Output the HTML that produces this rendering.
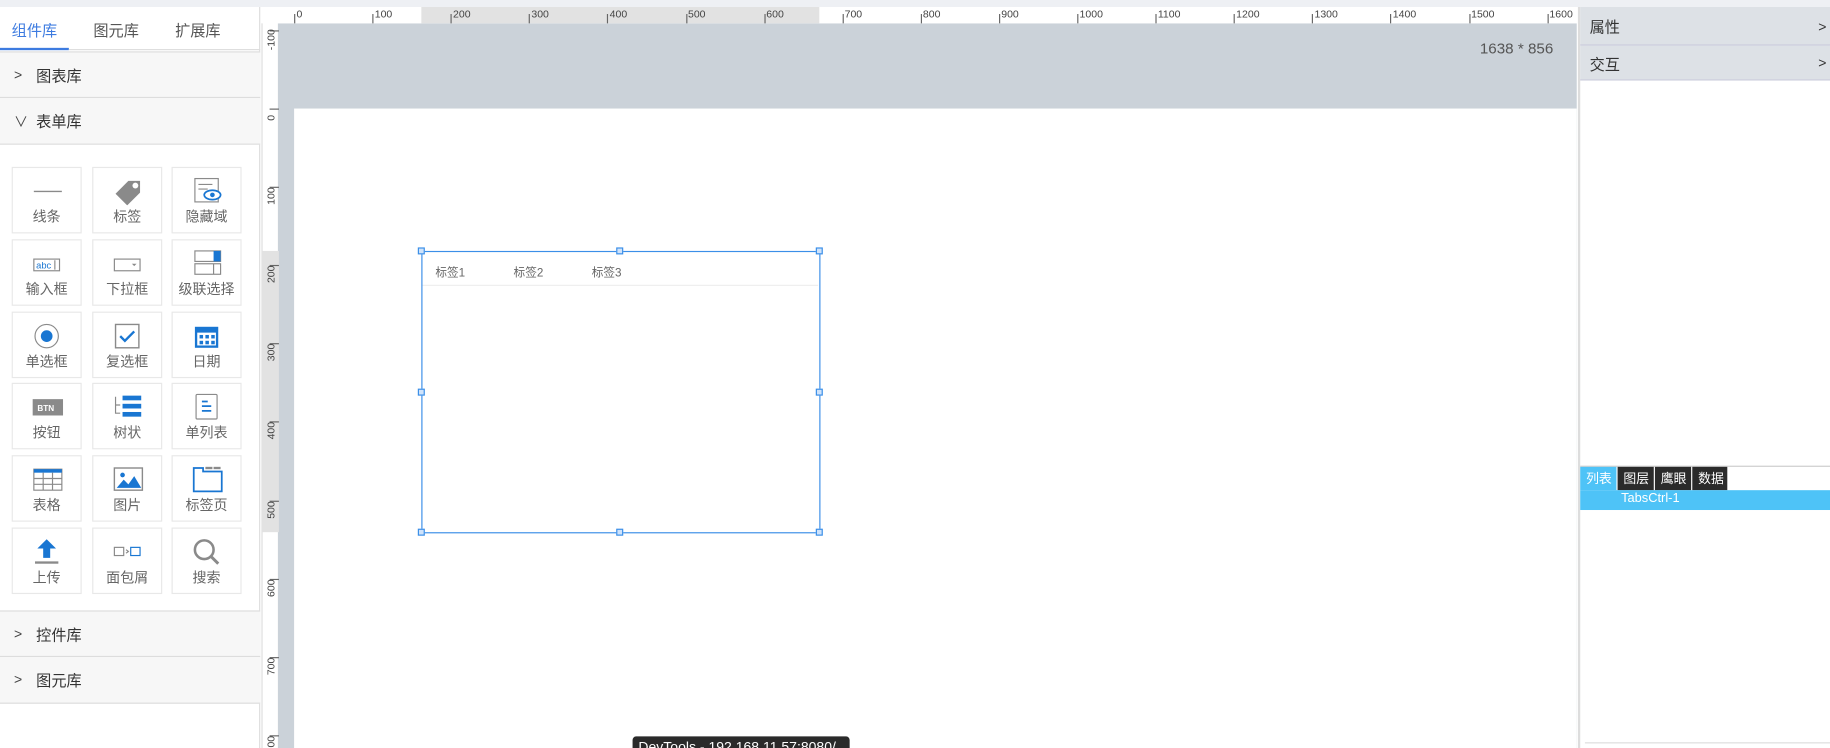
<!DOCTYPE html>
<html><head><meta charset="utf-8">
<style>
*{margin:0;padding:0;box-sizing:border-box}
html,body{width:1830px;height:748px;overflow:hidden;background:#fff}
#w{position:absolute;left:0;top:0;width:1568px;height:641px;transform:scale(1.16709);transform-origin:0 0;font-family:"Liberation Sans","Noto Sans CJK SC",sans-serif;color:#333;overflow:hidden}
.a{position:absolute}
.top{left:0;top:0;width:1568px;height:6px;background:#eef0f4}
.lp{left:0;top:6px;width:223px;height:635px;background:#fff;border-right:1px solid #ddd}
.tab{top:10px;font-size:13px;color:#555}
.sec{left:0;width:223px;height:40px;background:#f7f7f7;border-bottom:1px solid #ddd;font-size:13px;color:#333}
.sec span{position:absolute;left:31px;top:10px}
.sec i{position:absolute;left:12px;top:12px;font-style:normal;font-size:12px;color:#444}
.cell{width:60px;height:57px;border:1px solid #e8e8e8;background:#fff}
.cell b{position:absolute;left:0;right:0;top:33px;text-align:center;font-weight:normal;font-size:12px;color:#666}
.cell svg{position:absolute;left:16px;top:8px}
.rul{background:#fff;font-size:9px;color:#444}
.canvas{left:238px;top:20px;width:1113px;height:621px;background:#cbd2d9}
.page{left:252px;top:93px;width:1099px;height:548px;background:#fff}
.rp{left:1352px;top:6px;width:216px;height:635px;background:#fff;border-left:2px solid #ddd}
.rh{left:0;width:216px;height:33px;background:#dde1e6;border-bottom:1px solid #ccd;font-size:13px}
.rh span{position:absolute;left:8px;top:7px}
.rh i{position:absolute;right:5px;top:10px;font-style:normal;font-size:12px}
.h{width:6px;height:6px;border:1px solid #3b8fe8;background:#cfe3fb}
</style></head><body><div id="w">
<div class="a top"></div>
<div class="a lp">
 <div class="a tab" style="left:10px;color:#3d7be0">组件库</div>
 <div class="a tab" style="left:80px">图元库</div>
 <div class="a tab" style="left:150px">扩展库</div>
 <div class="a" style="left:0;top:35px;width:59px;height:2px;background:#3d7be0"></div>
 <div class="a" style="left:59px;top:36px;width:164px;height:1px;background:#ddd"></div>
 <div class="a sec" style="top:38px;border-top:1px solid #ddd"><i>&gt;</i><span>图表库</span></div>
 <div class="a sec" style="top:78px"><i>&#8744;</i><span>表单库</span></div>
 <div class="a sec" style="top:517px;border-top:1px solid #ddd"><i>&gt;</i><span>控件库</span></div>
 <div class="a sec" style="top:557px"><i>&gt;</i><span>图元库</span></div>
</div>
<div id="cells"></div>
<div class="a canvas"></div>
<div class="a page"></div>
<div class="a rul" id="hr" style="left:238px;top:6px;width:1113px;height:14px"></div>
<div class="a rul" id="vr" style="left:224px;top:20px;width:14px;height:621px;border-left:1px solid #ddd"></div>
<div class="a" style="left:1268px;top:34px;font-size:13px;color:#555">1638 * 856</div>
<div class="a" style="left:361px;top:215px;width:342px;height:242px;border:1.5px solid #3b8fe8;background:#fff">
 <div class="a" style="left:11px;top:9px;font-size:10px;color:#666">标签1</div>
 <div class="a" style="left:78px;top:9px;font-size:10px;color:#666">标签2</div>
 <div class="a" style="left:145px;top:9px;font-size:10px;color:#666">标签3</div>
 <div class="a" style="left:0;top:28px;width:339px;height:1px;background:#eee"></div>
</div>
<div class="a h" style="left:358px;top:212px"></div><div class="a h" style="left:528px;top:212px"></div><div class="a h" style="left:699px;top:212px"></div>
<div class="a h" style="left:358px;top:333px"></div><div class="a h" style="left:699px;top:333px"></div>
<div class="a h" style="left:358px;top:453px"></div><div class="a h" style="left:528px;top:453px"></div><div class="a h" style="left:699px;top:453px"></div>
<div class="a rp">
 <div class="a rh" style="top:0"><span>属性</span><i>&gt;</i></div>
 <div class="a rh" style="top:33px;height:30px"><span style="top:6px">交互</span><i style="top:8px">&gt;</i></div>
 <div class="a" style="left:0;top:393px;width:216px;height:1px;background:#ccc"></div>
 <div class="a" style="left:0;top:394px;width:31px;height:20px;background:#4ec3f7;color:#fff;font-size:11px;padding:2px 0 0 5px">列表</div>
 <div class="a" style="left:32px;top:394px;width:31px;height:20px;background:#2b2b2b;color:#fff;font-size:11px;padding:2px 0 0 5px">图层</div>
 <div class="a" style="left:64px;top:394px;width:31px;height:20px;background:#2b2b2b;color:#fff;font-size:11px;padding:2px 0 0 5px">鹰眼</div>
 <div class="a" style="left:96px;top:394px;width:30px;height:20px;background:#2b2b2b;color:#fff;font-size:11px;padding:2px 0 0 5px">数据</div>
 <div class="a" style="left:0;top:414px;width:216px;height:17px;background:#4ec3f7;color:#fff;font-size:11px;padding:1px 0 0 35px">TabsCtrl-1</div>
 <div class="a" style="left:4px;top:630px;width:212px;height:1px;background:#ddd"></div>
</div>
<div class="a" style="left:542px;top:631px;width:186px;height:14px;background:#2a2a2a;border-radius:3px;color:#fff;font-size:12px;padding:3px 0 0 5px;overflow:hidden;line-height:12px">DevTools - 192.168.11.57:8080/</div>
</div>
<script>
var B='#1976d2',G='#8a8a8a';
var icons=[
['线条','<line x1="2" y1="12" x2="26" y2="12" stroke="'+G+'" stroke-width="1.2"/>'],
['标签','<path d="M3 14 L14 3 H24 V13 L13 24 Z" fill="'+G+'"/><circle cx="20" cy="7" r="2.5" fill="#fff"/>'],
['隐藏域','<rect x="3" y="1" width="20" height="20" fill="none" stroke="'+G+'"/><line x1="6" y1="6" x2="18" y2="6" stroke="'+G+'"/><line x1="6" y1="10" x2="14" y2="10" stroke="'+G+'"/><ellipse cx="18" cy="15" rx="7" ry="4" fill="#fff" stroke="'+B+'" stroke-width="1.5"/><circle cx="18" cy="15" r="2" fill="'+B+'"/>'],
['输入框','<rect x="2" y="8" width="22" height="10" fill="none" stroke="'+G+'"/><text x="4" y="16" font-size="8" fill="'+B+'" font-family="Liberation Sans">abc</text><line x1="20" y1="9" x2="20" y2="17" stroke="'+G+'"/>'],
['下拉框','<rect x="2" y="8" width="22" height="10" fill="none" stroke="'+G+'"/><path d="M17 12 h4 l-2 2z" fill="'+G+'"/>'],
['级联选择','<rect x="3" y="1" width="22" height="9" fill="none" stroke="'+G+'"/><rect x="19" y="1" width="6" height="9" fill="'+B+'"/><rect x="3" y="12" width="22" height="9" fill="none" stroke="'+G+'"/><line x1="19" y1="12" x2="19" y2="21" stroke="'+G+'"/>'],
['单选框','<circle cx="13" cy="12" r="10" fill="none" stroke="'+G+'"/><circle cx="13" cy="12" r="5" fill="'+B+'"/>'],
['复选框','<rect x="3" y="2" width="20" height="20" fill="none" stroke="'+G+'" stroke-width="1.2"/><path d="M7 12 l4 4 l8 -8" fill="none" stroke="'+B+'" stroke-width="2"/>'],
['日期','<rect x="3" y="4" width="20" height="18" fill="'+B+'"/><rect x="5" y="9" width="16" height="11" fill="#fff"/><g fill="'+B+'"><rect x="7" y="11" width="3" height="3"/><rect x="12" y="11" width="3" height="3"/><rect x="17" y="11" width="3" height="3"/><rect x="7" y="16" width="3" height="3"/><rect x="12" y="16" width="3" height="3"/><rect x="17" y="16" width="3" height="3"/></g>'],
['按钮','<rect x="1" y="5" width="26" height="14" fill="'+G+'"/><text x="5" y="15" font-size="7" font-weight="bold" fill="#fff" font-family="Liberation Sans">BTN</text>'],
['树状','<path d="M3 3 v14 h4 M3 10 h4" fill="none" stroke="'+G+'"/><rect x="9" y="2" width="16" height="4" fill="'+B+'"/><rect x="9" y="9" width="16" height="4" fill="'+B+'"/><rect x="9" y="16" width="16" height="4" fill="'+B+'"/>'],
['单列表','<rect x="4" y="1" width="18" height="21" rx="1" fill="none" stroke="'+G+'"/><g stroke="'+B+'" stroke-width="1.5"><line x1="9" y1="7" x2="14" y2="7"/><line x1="9" y1="11" x2="17" y2="11"/><line x1="9" y1="15" x2="17" y2="15"/></g>'],
['表格','<rect x="2" y="3" width="24" height="18" fill="none" stroke="'+G+'"/><rect x="2" y="3" width="24" height="3" fill="'+B+'"/><g stroke="'+G+'"><line x1="2" y1="11" x2="26" y2="11"/><line x1="2" y1="16" x2="26" y2="16"/><line x1="10" y1="6" x2="10" y2="21"/><line x1="18" y1="6" x2="18" y2="21"/></g>'],
['图片','<rect x="2" y="2" width="24" height="19" fill="none" stroke="'+G+'" stroke-width="1.2"/><circle cx="9" cy="8" r="2" fill="'+B+'"/><path d="M4 19 l6 -7 l4 4 l5 -7 l6 10z" fill="'+B+'"/>'],
['标签页','<path d="M2 2 h8 v3 h16 v17 h-24z" fill="none" stroke="'+B+'" stroke-width="1.5"/><rect x="12" y="1" width="6" height="2" fill="'+G+'"/><rect x="19" y="1" width="6" height="2" fill="'+G+'"/>'],
['上传','<path d="M13 1 l8 8 h-5 v8 h-6 v-8 h-5z" fill="'+B+'"/><rect x="3" y="20" width="20" height="2" fill="'+G+'"/>'],
['面包屑','<rect x="2" y="8" width="8" height="7" fill="none" stroke="'+G+'"/><path d="M12 10 l2 1.5 l-2 1.5" fill="none" stroke="'+G+'"/><rect x="16" y="8" width="8" height="7" fill="none" stroke="'+B+'"/>'],
['搜索','<circle cx="11" cy="10" r="8" fill="none" stroke="'+G+'" stroke-width="2.2"/><line x1="17" y1="16" x2="23" y2="22" stroke="'+G+'" stroke-width="2.5"/>']
];
var h='',xs=[10,79,147],ys=[143,205,267,328,390,452];
icons.forEach(function(c,i){var x=xs[i%3],y=ys[Math.floor(i/3)];
h+='<div class="a cell" style="left:'+x+'px;top:'+y+'px"><svg width="28" height="24">'+c[1]+'</svg><b>'+c[0]+'</b></div>';});
document.getElementById('cells').innerHTML=h;
var hr='<div class="a" style="left:123px;top:0;width:341px;height:14px;background:#e2e2e2"></div>';
for(var v=-100;v<=1600;v+=100){var x=252+v*0.671-238;if(x<12)continue;
hr+='<div class="a" style="left:'+x+'px;top:6px;width:1px;height:8px;background:#666"></div><div class="a" style="left:'+(x+2)+'px;top:1px">'+v+'</div>';}
document.getElementById('hr').innerHTML=hr;
var vr='<div class="a" style="left:0;top:195px;width:14px;height:241px;background:#e2e2e2"></div>';
for(var v=-100;v<=800;v+=100){var y=93+v*0.671-20;if(y<0||y>625)continue;
vr+='<div class="a" style="left:6px;top:'+y+'px;width:8px;height:1px;background:#666"></div><div class="a" style="left:-8px;width:30px;height:10px;line-height:10px;text-align:center;transform:rotate(-90deg);transform-origin:50% 50%;top:'+(y+3)+'px">'+v+'</div>';}
document.getElementById('vr').innerHTML=vr;
</script>
</body></html>
